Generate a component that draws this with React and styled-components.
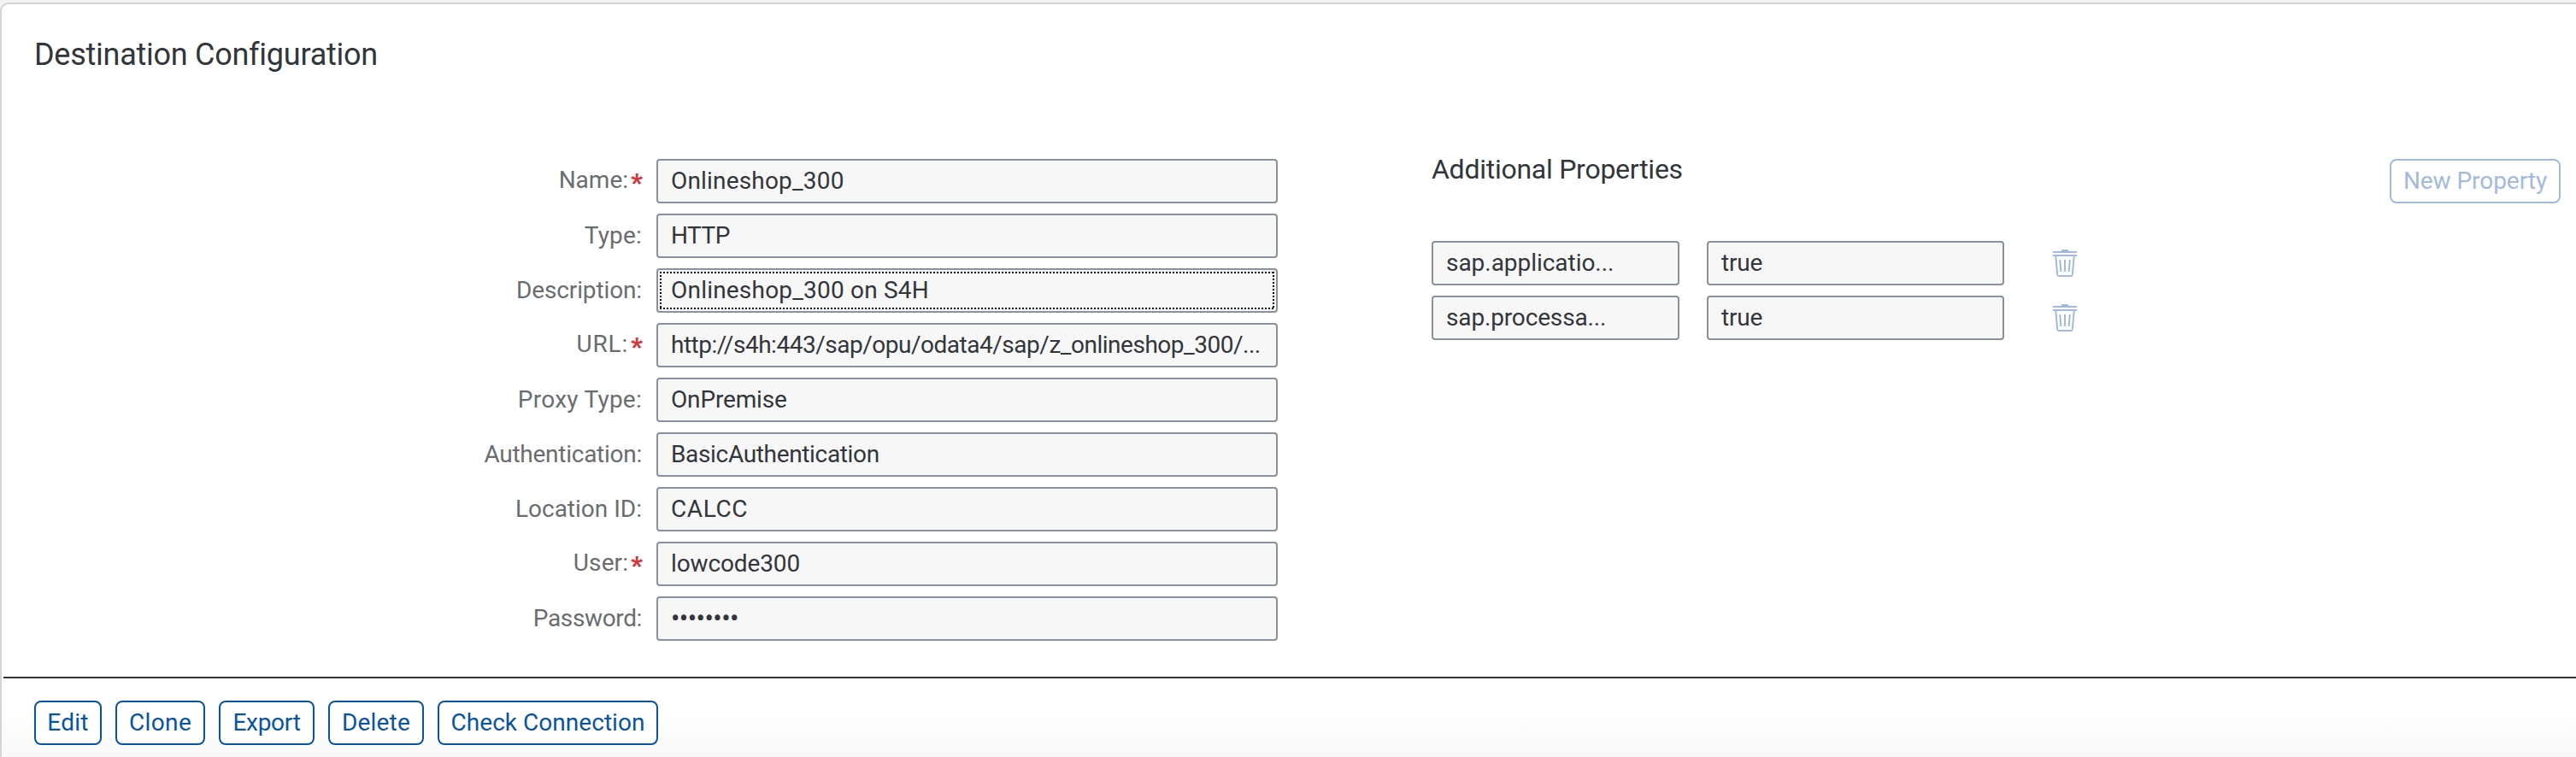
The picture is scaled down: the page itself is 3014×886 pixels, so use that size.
import React from 'react';
import styled, { createGlobalStyle } from 'styled-components';

const GlobalStyle = createGlobalStyle`
  * { box-sizing: border-box; }
  body {
    margin: 0;
    background: #f2f2f2;
    font-family: Roboto, "Liberation Sans", sans-serif;
    font-size: 28px;
    color: #32363a;
    overflow: hidden;
  }
`;

const Page = styled.div`
  height: 886px;
  padding-top: 3px;
  overflow: hidden;
`;

const Panel = styled.section`
  width: 3030px;
  height: 900px;
  border: 2px solid #d5d5d5;
  border-radius: 10px;
  background: linear-gradient(to bottom, #fff 0, #fff 825px, #f8f8f8 883px);
`;

const Title = styled.h1`
  margin: 0;
  padding: 38px 0 0 38px;
  height: 181px;
  font-size: 36px;
  line-height: 42px;
  font-weight: 400;
  letter-spacing: -0.26px;
`;

const Content = styled.div`
  display: grid;
  grid-template-columns: 1493px 180px 1321px;
  height: 606px;
`;

const Form = styled.div`
  display: flex;
  flex-direction: column;
  gap: 12px;
`;

const Row = styled.div`
  display: flex;
  align-items: center;
  height: 52px;
`;

const Label = styled.label`
  display: flex;
  justify-content: flex-end;
  width: 766px;
  padding-right: ${(p) => (p.$required ? 16 : 17)}px;
  line-height: 52px;
  color: #6a6d70;
  letter-spacing: ${(p) => p.$spacing}px;
  white-space: nowrap;
`;

const Required = styled.span`
  margin-left: 3px;
  padding-top: 3px;
  line-height: 52px;
  font-size: 30px;
  font-weight: 900;
  letter-spacing: 0;
  color: #d03a3a;
`;

const Field = styled.div`
  display: flex;
  width: ${(p) => p.$width}px;
  height: 52px;
  padding: ${(p) => (p.$focused ? '2px' : '0 0 0 15px')};
  border: 2px solid #89919a;
  border-radius: 4px;
  background: #f7f7f7;
  font-size: ${(p) => (p.$masked ? 31 : 28)}px;
  line-height: 47px;
  letter-spacing: ${(p) => p.$spacing}px;
  white-space: nowrap;
`;

const FocusRing = styled.div`
  position: relative;
  flex: 1;
  padding-left: 13px;
  line-height: 43px;

  svg {
    position: absolute;
    inset: 0;
    width: 100%;
    height: 100%;
  }
`;

const Properties = styled.div`
  display: flex;
  flex-direction: column;
  gap: 12px;
`;

const PropertiesHeader = styled.header`
  display: flex;
  justify-content: space-between;
  height: 84px;
`;

const Subtitle = styled.h2`
  margin: 0;
  font-size: 32px;
  line-height: 24px;
  font-weight: 400;
  letter-spacing: -0.26px;
`;

const PropertyRow = styled(Row)`
  gap: 32px;
`;

const IconButton = styled.button`
  display: flex;
  margin: 0 0 0 25px;
  padding: 0;
  border: 0;
  background: none;
  color: #a3badb;
`;

const Button = styled.button`
  width: ${(p) => p.$width}px;
  height: 52px;
  padding: 0;
  border: 2px solid currentColor;
  border-radius: 8px;
  background: #fff;
  font-family: inherit;
  font-size: 28px;
  line-height: 48px;
  letter-spacing: ${(p) => p.$spacing}px;
  white-space: nowrap;
  color: ${(p) => (p.$disabled ? '#a3badb' : '#0854a0')};
`;

const Toolbar = styled.footer`
  display: flex;
  gap: 16px;
  margin-left: 2px;
  padding: 26px 0 0 36px;
  border-top: 2px solid #32363a;
`;

const fields = [
  { label: 'Name:', ls: 0, required: true, value: 'Onlineshop_300', vs: 0.18 },
  { label: 'Type:', ls: 0.19, value: 'HTTP', vs: -0.5 },
  { label: 'Description:', ls: -0.13, value: 'Onlineshop_300 on S4H', vs: 0.2, focused: true },
  { label: 'URL:', ls: 0.8, required: true, value: 'http://s4h:443/sap/opu/odata4/sap/z_onlineshop_300/...', vs: -0.48 },
  { label: 'Proxy Type:', ls: 0.25, value: 'OnPremise', vs: -0.16 },
  { label: 'Authentication:', ls: -0.26, value: 'BasicAuthentication', vs: -0.34 },
  { label: 'Location ID:', ls: 0, value: 'CALCC', vs: 0.6 },
  { label: 'User:', ls: 0.09, required: true, value: 'lowcode300', vs: -0.12 },
  { label: 'Password:', ls: -0.37, value: '••••••••', vs: -0.6, masked: true },
];

const properties = [
  { name: 'sap.applicatio...', ls: -0.04, value: 'true' },
  { name: 'sap.processa...', ls: -0.15, value: 'true' },
];

const actions = [
  { text: 'Edit', width: 79, ls: 0.3 },
  { text: 'Clone', width: 105, ls: 0.38 },
  { text: 'Export', width: 112, ls: -0.3 },
  { text: 'Delete', width: 112, ls: 0.19 },
  { text: 'Check Connection', width: 258, ls: 0.04 },
];

function TrashIcon() {
  return (
    <svg width="28" height="32" viewBox="0 0 28 32" fill="none" stroke="currentColor" strokeWidth="2">
      <path d="M9 2 Q10 0 12 0 H16 Q18 0 19 2 Z" fill="currentColor" stroke="none" />
      <path d="M0 3 H28 M0 7 H28" />
      <path d="M3.2 8 L5.2 29.5 Q5.3 31 6.8 31 H21.2 Q22.7 31 22.8 29.5 L24.8 8" />
      <path d="M8.2 12 L9.4 26 M14 12 V26 M19.8 12 L18.6 26" />
    </svg>
  );
}

export default function App() {
  return (
    <Page>
      <GlobalStyle />
      <Panel>
        <Title>Destination Configuration</Title>
        <Content>
          <Form>
            {fields.map((f) => (
              <Row key={f.label}>
                <Label $spacing={f.ls} $required={f.required}>
                  {f.label}
                  {f.required && <Required>*</Required>}
                </Label>
                <Field $width={727} $spacing={f.vs} $focused={f.focused} $masked={f.masked}>
                  {f.focused ? (
                    <FocusRing>
                      <svg aria-hidden="true" fill="none" stroke="#000" strokeWidth="2" strokeDasharray="2 2">
                        <path d="M0 1 H719 M0 43 H719 M1 0 V44 M718 0 V44" />
                      </svg>
                      {f.value}
                    </FocusRing>
                  ) : (
                    f.value
                  )}
                </Field>
              </Row>
            ))}
          </Form>
          <span />
          <Properties>
            <PropertiesHeader>
              <Subtitle>Additional Properties</Subtitle>
              <Button $width={200} $spacing={-0.05} $disabled>New Property</Button>
            </PropertiesHeader>
            {properties.map((p) => (
              <PropertyRow key={p.name}>
                <Field $width={290} $spacing={p.ls}>{p.name}</Field>
                <Field $width={348} $spacing={-0.16}>{p.value}</Field>
                <IconButton aria-label="Delete property">
                  <TrashIcon />
                </IconButton>
              </PropertyRow>
            ))}
          </Properties>
        </Content>
        <Toolbar>
          {actions.map((a) => (
            <Button key={a.text} $width={a.width} $spacing={a.ls}>{a.text}</Button>
          ))}
        </Toolbar>
      </Panel>
    </Page>
  );
}
